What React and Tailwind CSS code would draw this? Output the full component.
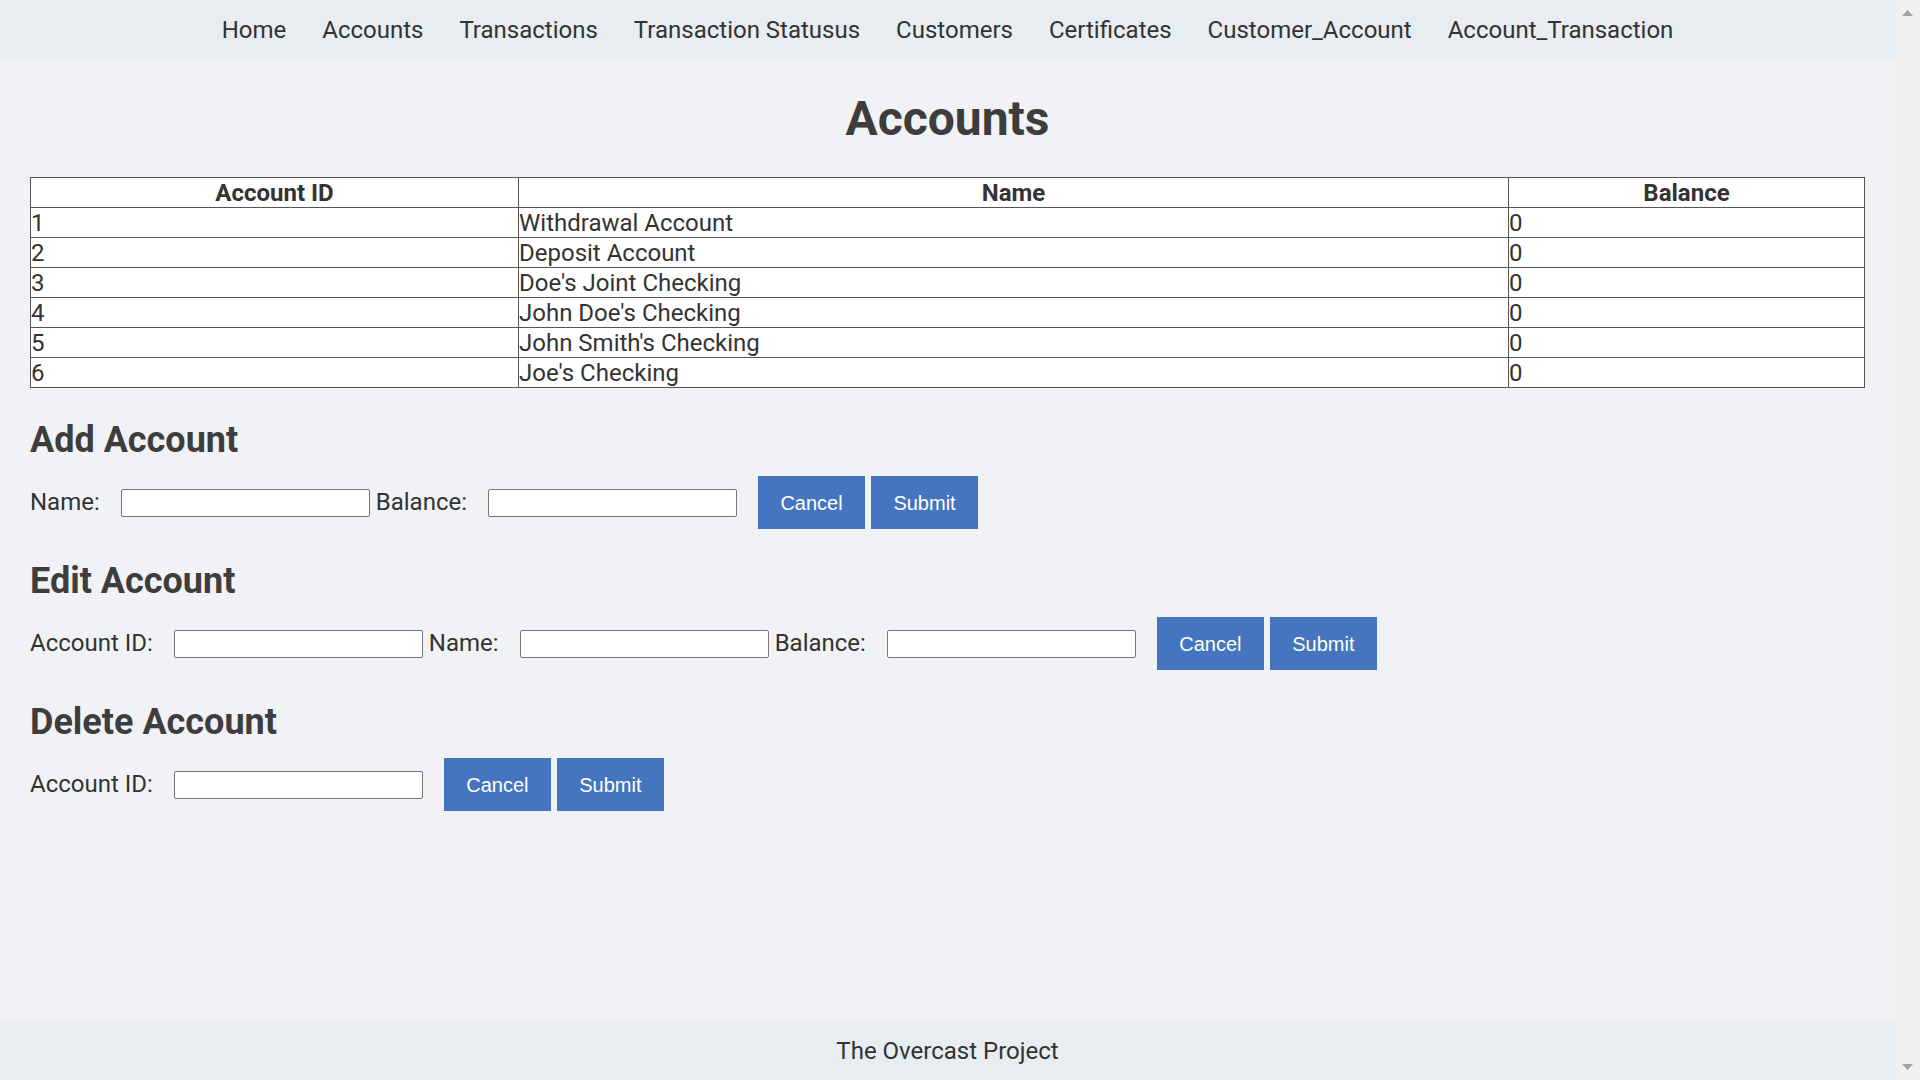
import React from "react";

const links = [
  "Home",
  "Accounts",
  "Transactions",
  "Transaction Statusus",
  "Customers",
  "Certificates",
  "Customer_Account",
  "Account_Transaction",
];

const rows = [
  [1, "Withdrawal Account", 0],
  [2, "Deposit Account", 0],
  [3, "Doe's Joint Checking", 0],
  [4, "John Doe's Checking", 0],
  [5, "John Smith's Checking", 0],
  [6, "Joe's Checking", 0],
];

function Input({ className = "" }) {
  return (
    <input
      type="text"
      className={
        "h-[28px] w-[249px] rounded-[2px] border border-[#767676] bg-white outline-none " +
        className
      }
    />
  );
}

function Label({ children, className = "" }) {
  return <span className={"mb-[2px] " + className}>{children}</span>;
}

function Buttons() {
  return (
    <>
      <button className="ml-[21px] h-[53px] w-[107px] bg-[#4475be] font-['Liberation_Sans',Arial,sans-serif] text-[20px] text-white">
        Cancel
      </button>
      <button className="ml-[6px] h-[53px] w-[107px] bg-[#4475be] font-['Liberation_Sans',Arial,sans-serif] text-[20px] text-white">
        Submit
      </button>
    </>
  );
}

function Section({ title, children }) {
  return (
    <section>
      <h2 className="mt-[31px] mb-[15px] text-[36px] font-bold leading-[42px] text-[#3d3d3d]">
        {title}
      </h2>
      <div className="flex h-[53px] items-center text-[24px] leading-[28px]">
        {children}
      </div>
    </section>
  );
}

export default function App() {
  return (
    <div className="flex h-screen w-full overflow-hidden bg-[#f1f2f6] font-['Roboto',sans-serif] text-[#333]">
      <div className="flex min-w-0 flex-1 flex-col">
        <nav className="flex h-[59px] shrink-0 items-center justify-center gap-[36px] bg-[#e8edf1] text-[24px] leading-[28px]">
          {links.map((l) => (
            <a key={l} href="#" className="text-[#333]">
              {l}
            </a>
          ))}
        </nav>
        <main className="flex-1 px-[30px]">
          <h1 className="mt-[32px] mb-[30px] text-center text-[48px] font-bold leading-[56px] text-[#3d3d3d]">
            Accounts
          </h1>
          <table className="w-[1835px] table-fixed border-collapse bg-white text-[24px] leading-[27px]">
            <colgroup>
              <col className="w-[488px]" />
              <col className="w-[990px]" />
              <col />
            </colgroup>
            <thead>
              <tr>
                <th className="border border-[#555] px-0 pt-[2px] pb-0 text-center font-bold">Account ID</th>
                <th className="border border-[#555] px-0 pt-[2px] pb-0 text-center font-bold">Name</th>
                <th className="border border-[#555] px-0 pt-[2px] pb-0 text-center font-bold">Balance</th>
              </tr>
            </thead>
            <tbody>
              {rows.map((r) => (
                <tr key={r[0]}>
                  <td className="border border-[#555] px-0 pt-[2px] pb-0 text-left">{r[0]}</td>
                  <td className="border border-[#555] px-0 pt-[2px] pb-0 text-left">{r[1]}</td>
                  <td className="border border-[#555] px-0 pt-[2px] pb-0 text-left">{r[2]}</td>
                </tr>
              ))}
            </tbody>
          </table>

          <Section title="Add Account">
            <Label>Name:</Label>
            <Input className="ml-[21px]" />
            <Label className="ml-[6px]">Balance:</Label>
            <Input className="ml-[21px]" />
            <Buttons />
          </Section>

          <Section title="Edit Account">
            <Label>Account ID:</Label>
            <Input className="ml-[21px]" />
            <Label className="ml-[6px]">Name:</Label>
            <Input className="ml-[21px]" />
            <Label className="ml-[6px]">Balance:</Label>
            <Input className="ml-[21px]" />
            <Buttons />
          </Section>

          <Section title="Delete Account">
            <Label>Account ID:</Label>
            <Input className="ml-[21px]" />
            <Buttons />
          </Section>
        </main>
        <footer className="flex h-[59px] shrink-0 items-center justify-center bg-[#e8edf1] text-[24px] leading-[28px]">
          The Overcast Project
        </footer>
      </div>
      <div className="flex w-[25px] shrink-0 flex-col items-center justify-between bg-[#f0f0f0] py-[10px]">
        <svg width="11" height="6" viewBox="0 0 11 6">
          <polygon points="5.5,0 11,6 0,6" fill="#a3a3a3" />
        </svg>
        <svg width="11" height="6" viewBox="0 0 11 6">
          <polygon points="0,0 11,0 5.5,6" fill="#a3a3a3" />
        </svg>
      </div>
    </div>
  );
}
